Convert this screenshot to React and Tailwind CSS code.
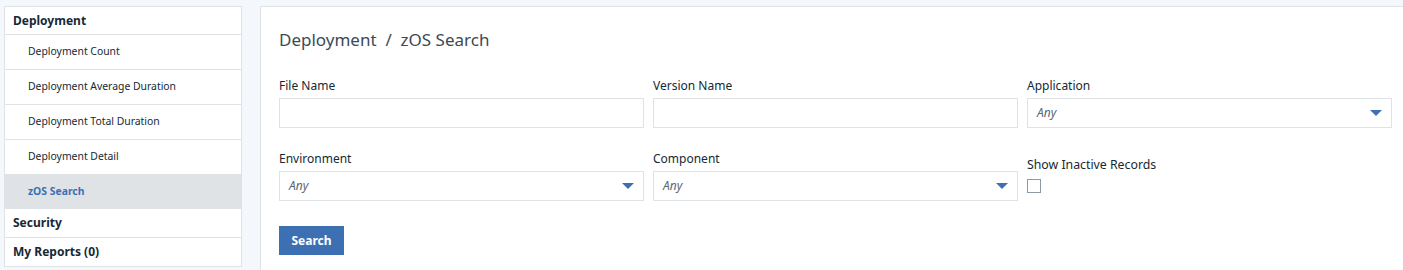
import React, { useState } from 'react';

const font = { fontFamily: '"Noto Sans", "Liberation Sans", sans-serif' };

const subItems = [
  'Deployment Count',
  'Deployment Average Duration',
  'Deployment Total Duration',
  'Deployment Detail',
  'zOS Search',
];

const Caret = () => (
  <svg width="12" height="7" viewBox="0 0 12 7" className="shrink-0">
    <path d="M0 0 L12 0 L6 6 Z" fill="#3d70b2" />
  </svg>
);

const Field = ({ label, children }) => (
  <div className="flex flex-col">
    <label className="text-[12px] leading-[16px] text-[#152935] mb-[4px]">{label}</label>
    {children}
  </div>
);

const SelectBox = () => (
  <div className="h-[30px] border border-[#dfe3e6] bg-white flex items-center justify-between pl-[9px] pr-[9px]">
    <span className="italic text-[12px] text-[#5a6872]">Any</span>
    <Caret />
  </div>
);

const App = () => {
  const [active, setActive] = useState('zOS Search');
  const [inactive, setInactive] = useState(false);

  return (
    <div className="w-[1403px] h-[270px] bg-[#f4f7fb] flex items-start pt-[6px] pl-[4px] overflow-hidden" style={font}>
      {/* Sidebar */}
      <div className="w-[238px] bg-white border border-[#dfe3e6] flex flex-col">
        <div className="h-[28px] flex items-center px-[8px] text-[12px] font-bold text-[#152935] border-b border-[#dfe3e6]">
          Deployment
        </div>
        {subItems.map((item, i) => (
          <button
            key={item}
            onClick={() => setActive(item)}
            className={`${i === 4 ? 'h-[34px]' : 'h-[35px]'} flex items-center pl-[23px] text-left text-[10.4px] border-b border-[#dfe3e6] ${
              active === item ? 'bg-[#dfe3e6] text-[#3d70b2] font-bold' : 'text-[#152935]'
            }`}
          >
            {item}
          </button>
        ))}
        <div className="h-[29px] flex items-center px-[8px] text-[12px] font-bold text-[#152935] border-b border-[#dfe3e6]">
          Security
        </div>
        <div className="h-[28px] flex items-center px-[8px] text-[12px] font-bold text-[#152935]">
          My Reports (0)
        </div>
      </div>

      {/* Main */}
      <div className="ml-[18px] flex-1 h-[270px] bg-white border-l border-t border-[#dfe3e6] pl-[18px] pr-[10px] pt-[22px]">
        <h1 className="text-[17px] leading-[22px] text-[#3d4a55] mb-[27px]">
          Deployment&nbsp; /&nbsp; zOS Search
        </h1>
        <div className="grid grid-cols-[365px_365px_365px] gap-x-[9px] gap-y-[23px]">
          <Field label="File Name">
            <input className="h-[30px] border border-[#dfe3e6] bg-white outline-none" />
          </Field>
          <Field label="Version Name">
            <input className="h-[30px] border border-[#dfe3e6] bg-white outline-none" />
          </Field>
          <Field label="Application">
            <SelectBox />
          </Field>
          <Field label="Environment">
            <SelectBox />
          </Field>
          <Field label="Component">
            <SelectBox />
          </Field>
          <div className="flex flex-col pt-[6px]">
            <label className="text-[12.3px] leading-[16px] text-[#152935] mb-[6px]">Show Inactive Records</label>
            <button
              onClick={() => setInactive(!inactive)}
              className="w-[14px] h-[14px] border-[1.5px] border-[#8c9ba5] bg-white"
            />
          </div>
        </div>
        <button className="block mt-[25px] h-[29px] w-[65px] bg-[#3d70b2] text-white text-[12px] font-bold">
          Search
        </button>
      </div>
    </div>
  );
};

export default App;
